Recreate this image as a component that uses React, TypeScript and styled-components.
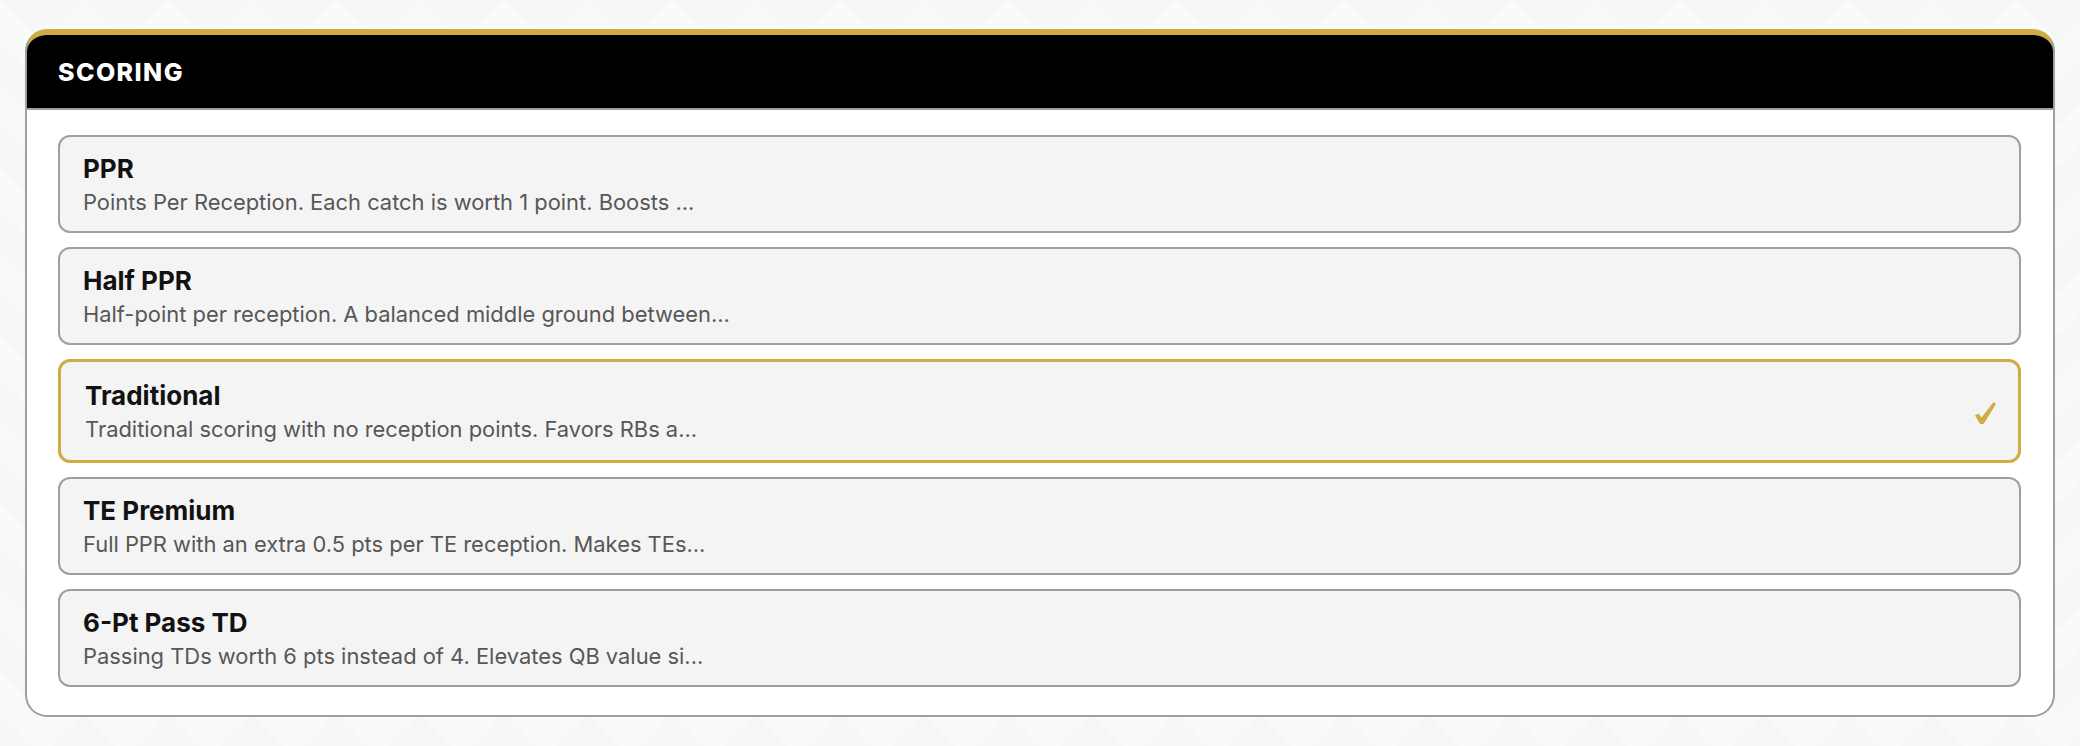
import styled, { createGlobalStyle } from 'styled-components'

const GOLD = '#cfad43'
const LINE = '#9f9f9f'

type Option = {
    id: string
    name: string
    blurb: string
}

const options: Option[] = [
    { id: 'ppr', name: 'PPR', blurb: 'Points Per Reception. Each catch is worth 1 point. Boosts ...' },
    { id: 'half', name: 'Half PPR', blurb: 'Half-point per reception. A balanced middle ground between...' },
    { id: 'std', name: 'Traditional', blurb: 'Traditional scoring with no reception points. Favors RBs a...' },
    { id: 'te', name: 'TE Premium', blurb: 'Full PPR with an extra 0.5 pts per TE reception. Makes TEs...' },
    { id: 'pass6', name: '6-Pt Pass TD', blurb: 'Passing TDs worth 6 pts instead of 4. Elevates QB value si...' },
]

const GlobalStyle = createGlobalStyle`
    * {
        box-sizing: border-box;
    }
    html, body {
        margin: 0;
        height: 100%;
    }
    body {
        font-family: Inter, 'Liberation Sans', sans-serif;
        background-color: #f9fafa;
        background-image:
            linear-gradient(135deg, #f6f7f7 25%, transparent 25%),
            linear-gradient(225deg, #f6f7f7 25%, transparent 25%),
            linear-gradient(315deg, #f6f7f7 25%, transparent 25%),
            linear-gradient(45deg, #f6f7f7 25%, transparent 25%);
        background-position: -42px 0, -42px 0, 0 0, 0 0;
        background-size: 84px 84px;
    }
`

// calligraphic tick: short stroke, long stroke tapering upward
const CheckMark = () => (
    <svg width="21" height="22" viewBox="0 0 21 22">
        <path
            d="M0 13.6 L3.3 11.4 L6.6 15.6 L18.4 0 L21 1.9 L8.6 22 L5 22 Z"
            fill={GOLD}
        />
    </svg>
)

export default function App() {
    const selected = 'std'
    return (
        <>
            <GlobalStyle />
            <Page>
                <Panel>
                    <PanelHeader>
                        <PanelTitle>SCORING</PanelTitle>
                    </PanelHeader>
                    <OptionList>
                        {options.map((o) => (
                            <OptionCard key={o.id} $active={o.id === selected}>
                                <OptionText>
                                    <OptionName>{o.name}</OptionName>
                                    <OptionBlurb>{o.blurb}</OptionBlurb>
                                </OptionText>
                                {o.id === selected && (
                                    <Check>
                                        <CheckMark />
                                    </Check>
                                )}
                            </OptionCard>
                        ))}
                    </OptionList>
                </Panel>
            </Page>
        </>
    )
}

const Page = styled.div`
    padding: 29px 25px;
`

const Panel = styled.section`
    background: #fff;
    border: 2px solid ${LINE};
    border-top: 6px solid ${GOLD};
    border-radius: 22px;
    overflow: hidden;
`

const PanelHeader = styled.header`
    background: #000;
    height: 75px;
    display: flex;
    align-items: center;
    padding: 0 31px;
    border-bottom: 2px solid ${LINE};
`

const PanelTitle = styled.h2`
    margin: 0;
    color: #fff;
    font-size: 25px;
    font-weight: 800;
    letter-spacing: 1.4px;
`

const OptionList = styled.div`
    display: flex;
    flex-direction: column;
    gap: 14px;
    padding: 25px 32px 28px 31px;
`

const OptionCard = styled.div<{ $active?: boolean }>`
    display: flex;
    align-items: center;
    background: #f4f4f4;
    border-radius: 12px;
    border: ${(p) => (p.$active ? `3px solid ${GOLD}` : `2px solid ${LINE}`)};
    padding: ${(p) => (p.$active ? '18px 22px 18px 24px' : '16px 23px')};
    cursor: pointer;
`

const OptionText = styled.div`
    flex: 1;
    display: flex;
    flex-direction: column;
`

const OptionName = styled.div`
    color: #121212;
    font-size: 26px;
    font-weight: 700;
    line-height: 31px;
`

const OptionBlurb = styled.div`
    margin-top: 5px;
    color: #575757;
    font-size: 21.9px;
    line-height: 26px;
`

const Check = styled.span`
    display: flex;
    margin-top: 4px;
`
